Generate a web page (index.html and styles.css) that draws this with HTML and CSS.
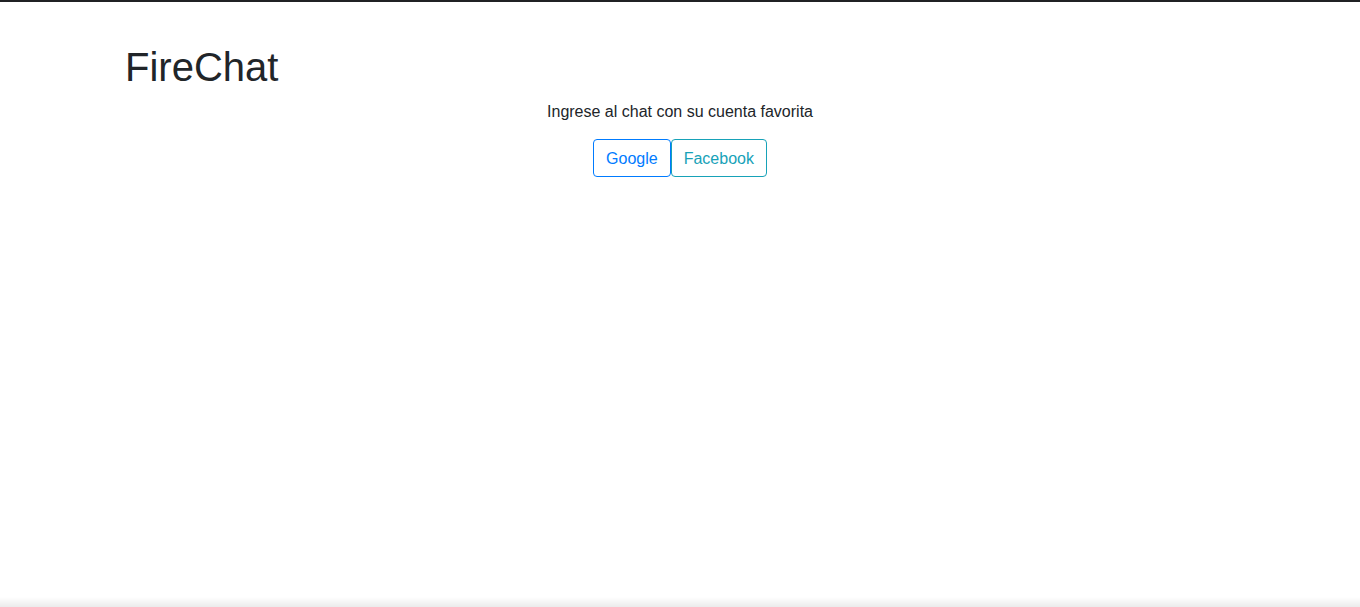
FILE: index.html
```html
<!DOCTYPE html>
<html lang="es">
<head>
<meta charset="utf-8">
<title>FireChat</title>
<link rel="stylesheet" href="styles.css">
</head>
<body>
<div class="topbar"></div>
<main class="container">
  <h1 class="title">FireChat</h1>
  <div class="login">
    <p class="lead-text">Ingrese al chat con su cuenta favorita</p>
    <div class="buttons"><button class="btn btn-google">Google</button><button class="btn btn-facebook">Facebook</button></div>
  </div>
</main>
<div class="bottom-shade"></div>
</body>
</html>
```

FILE: styles.css
```css
* { box-sizing: border-box; }
html, body { margin: 0; height: 100%; }
body {
  font-family: "Liberation Sans", Arial, sans-serif;
  font-size: 16px;
  line-height: 1.5;
  color: #212529;
  background: #fff;
  position: relative;
  overflow: hidden;
}
.topbar { height: 2px; background: #202124; }
.container {
  width: 1140px;
  margin: 0 auto;
  padding: 0 15px;
  padding-top: 41px;
}
.title {
  margin: 0 0 9px;
  font-size: 40px;
  font-weight: 500;
  line-height: 1.2;
}
.login { text-align: center; }
.lead-text { margin: 0 0 15px; }
.buttons { font-size: 0; }
.btn {
  font-family: inherit;
  font-size: 16px;
  line-height: 24px;
  padding: 7px 12px 5px;
  border: 1px solid;
  border-radius: 4px;
  background: transparent;
  cursor: pointer;
  vertical-align: middle;
}
.btn-google { color: #007bff; border-color: #007bff; }
.btn-facebook { color: #17a2b8; border-color: #17a2b8; }
.bottom-shade {
  position: absolute;
  left: 0; right: 0; bottom: 0;
  height: 10px;
  background: linear-gradient(to bottom, rgba(235,235,235,0), #ebebeb);
}
```
